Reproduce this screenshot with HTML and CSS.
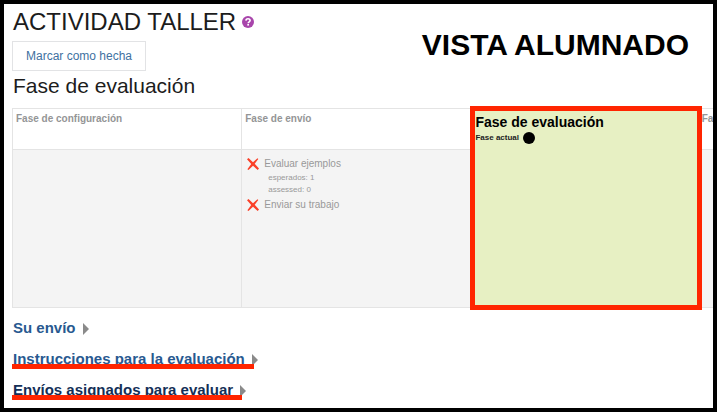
FILE: index.html
```html
<!DOCTYPE html>
<html lang="es">
<head>
<meta charset="utf-8">
<meta name="viewport" content="width=device-width, initial-scale=1">
<title>ACTIVIDAD TALLER</title>
<link rel="stylesheet" href="styles.css">
</head>
<body>
<main class="page">
  <header class="top">
    <div class="activity">
      <h1 class="title">ACTIVIDAD TALLER
        <svg class="help" viewBox="0 0 12 12" aria-hidden="true"><circle cx="6" cy="6" r="6" fill="#a845ab"/><path d="M3.900 4.600C4 3.200 4.900 2.700 6 2.700c1.200 0 2.100.7 2.100 1.800C8.100 5.900 6.200 5.800 6.200 7.200" fill="none" stroke="#fff" stroke-width="1.600"/><rect x="5.300" y="8" width="1.700" height="1.600" fill="#fff"/></svg>
      </h1>
      <button class="done" type="button">Marcar como hecha</button>
      <h2 class="phase-title">Fase de evaluación</h2>
    </div>
    <p class="view">VISTA ALUMNADO</p>
  </header>

  <div class="plan">
    <section class="phase">
      <h3 class="phase-head">Fase de configuración</h3>
      <div class="tasks"></div>
    </section>
    <section class="phase">
      <h3 class="phase-head">Fase de envío</h3>
      <ul class="tasks">
        <li class="task">
          <svg class="cross" viewBox="0 0 12 12" aria-hidden="true"><path d="M1.500 0 6 4.200 10.500.2 11.300 1 7.700 5.700 12 10.600 10.700 12 6 7.800 1.500 12 .4 11.200 4.200 6.100 0 1.300Z" fill="#fa4028"/></svg>
          <div>Evaluar ejemplos
            <div class="details"><div>esperados: 1</div><div>assessed: 0</div></div>
          </div>
        </li>
        <li class="task">
          <svg class="cross" viewBox="0 0 12 12" aria-hidden="true"><path d="M1.500 0 6 4.200 10.500.2 11.300 1 7.700 5.700 12 10.600 10.700 12 6 7.800 1.500 12 .4 11.200 4.200 6.100 0 1.300Z" fill="#fa4028"/></svg>
          <div>Enviar su trabajo</div>
        </li>
      </ul>
    </section>
    <section class="phase current">
      <h3 class="current-title">Fase de evaluación</h3>
      <div class="now">Fase actual <span class="dot"></span></div>
    </section>
    <section class="phase next">
      <h3 class="phase-head">Fa</h3>
      <div class="tasks"></div>
    </section>
  </div>

  <nav class="links">
    <a class="link" href="#envio">Su envío</a>
    <a class="link marked" href="#instrucciones">Instrucciones para la evaluación</a>
    <a class="link marked dark" href="#asignados">Envíos asignados para evaluar</a>
  </nav>
</main>
</body>
</html>
```
FILE: styles.css
```css
* {
  box-sizing: border-box;
}

body {
  margin: 0;
  font-family: "Liberation Sans", Arial, sans-serif;
  background: #fff;
}

h1, h2, h3, p, ul {
  margin: 0;
  padding: 0;
}

.page {
  min-height: 100vh;
  padding: 4px 0 0 8px;
  border: 4px solid #000;
  overflow: hidden;
}

.top {
  display: flex;
  justify-content: space-between;
}

.title {
  display: flex;
  align-items: center;
  gap: 6px;
  padding-left: 1px;
  font-size: 24px;
  font-weight: 400;
  line-height: 28px;
  color: #1c1c1c;
}

.help {
  width: 12px;
  height: 12px;
}

.done {
  display: block;
  height: 30px;
  margin-top: 5px;
  padding: 0 13px;
  border: 1px solid #e2e3e5;
  background: #fff;
  font: 12px "Liberation Sans", Arial, sans-serif;
  color: #41719f;
}

.phase-title {
  margin-top: 1px;
  padding-left: 1px;
  font-size: 21px;
  font-weight: 400;
  line-height: 28px;
  color: #1c1c1c;
}

.view {
  margin: 20px 24px 0 0;
  font-size: 30px;
  font-weight: 700;
  line-height: 34px;
  color: #000;
}

.plan {
  display: grid;
  grid-template-columns: 32.7% 32.7% 33% 1fr;
  height: 200px;
  margin-top: 8px;
}

.phase {
  display: flex;
  flex-direction: column;
  border: 1px solid #e4e4e4;
  border-right: 0;
  color: #999;
}

.phase-head {
  height: 41px;
  padding: 3px;
  border-bottom: 1px solid #e4e4e4;
  font-size: 10px;
  line-height: 14px;
  color: #949596;
}

.next {
  border-left: 0;
}

.next .phase-head {
  padding: 3px 0;
}

.tasks {
  flex: 1;
  padding: 6px 5px;
  background: #f4f4f4;
  list-style: none;
}

.task {
  display: flex;
  gap: 5px;
  font-size: 10px;
  line-height: 16px;
}

.cross {
  width: 12px;
  height: 12px;
  margin-top: 2px;
}

.details {
  padding: 0 0 1px 4px;
  font-size: 8px;
  line-height: 12px;
}

.current {
  margin: -2px 0;
  border: 5px solid #ff2500;
  background: #e7f0c3;
  color: #000;
}

.current-title {
  padding-top: 2px;
  font-size: 14px;
  line-height: 18px;
}

.now {
  display: flex;
  align-items: center;
  gap: 4px;
  font-size: 8px;
  font-weight: 700;
  line-height: 14px;
  color: #222;
}

.dot {
  width: 12px;
  height: 12px;
  border-radius: 50%;
  background: #000;
}

.links {
  display: flex;
  flex-direction: column;
  align-items: flex-start;
  gap: 11px;
  padding: 10px 0 0 1px;
}

.link {
  position: relative;
  display: flex;
  align-items: center;
  gap: 7px;
  font-size: 15px;
  font-weight: 700;
  line-height: 20px;
  color: #285990;
  text-decoration: none;
}

.link::after {
  content: "";
  margin-top: 2px;
  border: 6px solid transparent;
  border-left-color: #8a8a8a;
  border-right: 0;
}

.dark {
  color: #142f57;
}

.marked::before {
  content: "";
  position: absolute;
  left: -1px;
  right: 4px;
  bottom: 0;
  height: 5px;
  background: #ff2500;
}
```
